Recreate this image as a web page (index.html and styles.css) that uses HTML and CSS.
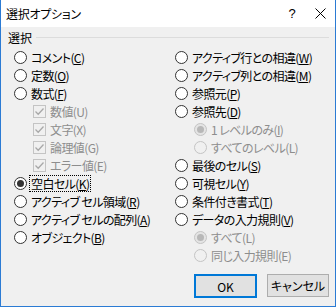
FILE: index.html
```html
<!DOCTYPE html>
<html lang="ja">
<head>
<meta charset="utf-8">
<link rel="stylesheet" href="styles.css">
</head>
<body>
<div class="window">
  <div class="titlebar">
    <span class="title">選択オプション</span>
    <span class="tb-btn help">?</span>
    <span class="tb-btn close"><svg width="11" height="11" viewBox="0 0 11 11"><path d="M0.5 0.5 L10.5 10.5 M10.5 0.5 L0.5 10.5" stroke="#000" stroke-width="1" fill="none"/></svg></span>
  </div>
  <div class="content">
    <div class="legend"><span class="legend-text">選択</span><span class="legend-line"></span></div>
    <div class="columns">
      <div class="col left">
        <div class="opt"><span class="radio"></span><span class="lbl">コメント(<u>C</u>)</span></div>
        <div class="opt"><span class="radio"></span><span class="lbl">定数(<u>O</u>)</span></div>
        <div class="opt"><span class="radio"></span><span class="lbl">数式(<u>F</u>)</span></div>
        <div class="opt sub dis"><span class="check"><svg width="11" height="11" viewBox="0 0 11 11"><path d="M1.5 5.5 L4.2 8.2 L9.5 2.5" stroke="#a8a8a8" stroke-width="1.3" fill="none"/></svg></span><span class="lbl">数値(U)</span></div>
        <div class="opt sub dis"><span class="check"><svg width="11" height="11" viewBox="0 0 11 11"><path d="M1.5 5.5 L4.2 8.2 L9.5 2.5" stroke="#a8a8a8" stroke-width="1.3" fill="none"/></svg></span><span class="lbl">文字(X)</span></div>
        <div class="opt sub dis"><span class="check"><svg width="11" height="11" viewBox="0 0 11 11"><path d="M1.5 5.5 L4.2 8.2 L9.5 2.5" stroke="#a8a8a8" stroke-width="1.3" fill="none"/></svg></span><span class="lbl">論理値(G)</span></div>
        <div class="opt sub dis"><span class="check"><svg width="11" height="11" viewBox="0 0 11 11"><path d="M1.5 5.5 L4.2 8.2 L9.5 2.5" stroke="#a8a8a8" stroke-width="1.3" fill="none"/></svg></span><span class="lbl">エラー値(E)</span></div>
        <div class="opt"><span class="radio on"></span><span class="lbl focus">空白セル(<u>K</u>)</span></div>
        <div class="opt"><span class="radio"></span><span class="lbl">アクティブ セル領域(<u>R</u>)</span></div>
        <div class="opt"><span class="radio"></span><span class="lbl">アクティブ セルの配列(<u>A</u>)</span></div>
        <div class="opt"><span class="radio"></span><span class="lbl">オブジェクト(<u>B</u>)</span></div>
      </div>
      <div class="col right">
        <div class="opt"><span class="radio"></span><span class="lbl">アクティブ行との相違(<u>W</u>)</span></div>
        <div class="opt"><span class="radio"></span><span class="lbl">アクティブ列との相違(<u>M</u>)</span></div>
        <div class="opt"><span class="radio"></span><span class="lbl">参照元(<u>P</u>)</span></div>
        <div class="opt"><span class="radio"></span><span class="lbl">参照先(<u>D</u>)</span></div>
        <div class="opt sub dis"><span class="radio on"></span><span class="lbl">1 レベルのみ(<u>I</u>)</span></div>
        <div class="opt sub dis"><span class="radio"></span><span class="lbl">すべてのレベル(L)</span></div>
        <div class="opt"><span class="radio"></span><span class="lbl">最後のセル(<u>S</u>)</span></div>
        <div class="opt"><span class="radio"></span><span class="lbl">可視セル(<u>Y</u>)</span></div>
        <div class="opt"><span class="radio"></span><span class="lbl">条件付き書式(<u>T</u>)</span></div>
        <div class="opt"><span class="radio"></span><span class="lbl">データの入力規則(<u>V</u>)</span></div>
        <div class="opt sub dis"><span class="radio on"></span><span class="lbl">すべて(L)</span></div>
        <div class="opt sub dis"><span class="radio"></span><span class="lbl">同じ入力規則(E)</span></div>
      </div>
    </div>
    <div class="footer">
      <span class="btn default">OK</span>
      <span class="btn">キャンセル</span>
    </div>
  </div>
</div>
</body>
</html>
```

FILE: styles.css
```css
html, body {
  margin: 0;
  padding: 0;
}
body {
  font-family: "Noto Sans CJK JP", "Noto Sans", sans-serif;
  font-size: 12px;
  color: #000;
  background: #fff;
}
.window {
  width: 336px;
  height: 307px;
  box-sizing: border-box;
  border: 1px solid #2b7bd4;
  border-top: none;
  display: flex;
  flex-direction: column;
  background: #f0f0f0;
}
.titlebar {
  height: 27px;
  background: #fff;
  display: flex;
  align-items: center;
  flex-shrink: 0;
}
.title {
  padding-left: 5px;
  padding-bottom: 1px;
  flex: 1;
  font-feature-settings: "palt";
  letter-spacing: -0.3px;
}
.tb-btn {
  display: flex;
  align-items: center;
  justify-content: center;
  height: 27px;
}
.help {
  width: 28px;
  font-family: "Liberation Sans", sans-serif;
  font-size: 13px;
}
.close {
  width: 28px;
  margin-right: 1px;
}
.content {
  flex: 1;
  display: flex;
  flex-direction: column;
  padding: 0 6px 0 7px;
}
.legend {
  display: flex;
  align-items: center;
  height: 21px;
}
.legend-text {
  padding-right: 4px;
}
.legend-line {
  flex: 1;
  height: 1px;
  background: #dcdcdc;
}
.columns {
  display: flex;
  padding-left: 6px;
}
.col {
  display: flex;
  flex-direction: column;
}
.left {
  width: 161px;
}
.opt {
  height: 18px;
  display: flex;
  align-items: center;
  white-space: nowrap;
  font-feature-settings: "palt";
  letter-spacing: -0.6px;
}
.opt.sub {
  padding-left: 19px;
}
.dis {
  color: #8d8d8d;
}
.radio {
  width: 13px;
  height: 13px;
  box-sizing: border-box;
  border: 1px solid #333;
  border-radius: 50%;
  background: #fff;
  margin-right: 4px;
  display: flex;
  align-items: center;
  justify-content: center;
  flex-shrink: 0;
}
.radio.on::after {
  content: "";
  width: 7px;
  height: 7px;
  border-radius: 50%;
  background: #333;
}
.dis .radio {
  border-color: #c4c4c4;
  background: #f0f0f0;
}
.dis .radio.on {
  background: #e4e4e4;
}
.dis .radio.on::after {
  background: #b8b8b8;
}
.check {
  width: 13px;
  height: 13px;
  box-sizing: border-box;
  border: 1px solid #c4c4c4;
  background: #f0f0f0;
  margin-right: 4px;
  display: flex;
  align-items: center;
  justify-content: center;
  flex-shrink: 0;
}
.lbl u {
  text-decoration-thickness: 1px;
  text-underline-offset: 1px;
}
.focus {
  outline: 1px dotted #000;
  outline-offset: 0;
  padding: 0 1px;
  margin-left: -1px;
  line-height: 15px;
}
.footer {
  display: flex;
  justify-content: flex-end;
  gap: 10px;
  margin-top: auto;
  margin-bottom: 8px;
}
.btn {
  width: 62px;
  height: 23px;
  box-sizing: border-box;
  border: 1px solid #adadad;
  background: #e1e1e1;
  display: flex;
  align-items: center;
  justify-content: center;
  font-feature-settings: "palt";
}
.btn.default {
  border: 2px solid #0078d7;
  width: 63px;
  height: 24px;
}
```
